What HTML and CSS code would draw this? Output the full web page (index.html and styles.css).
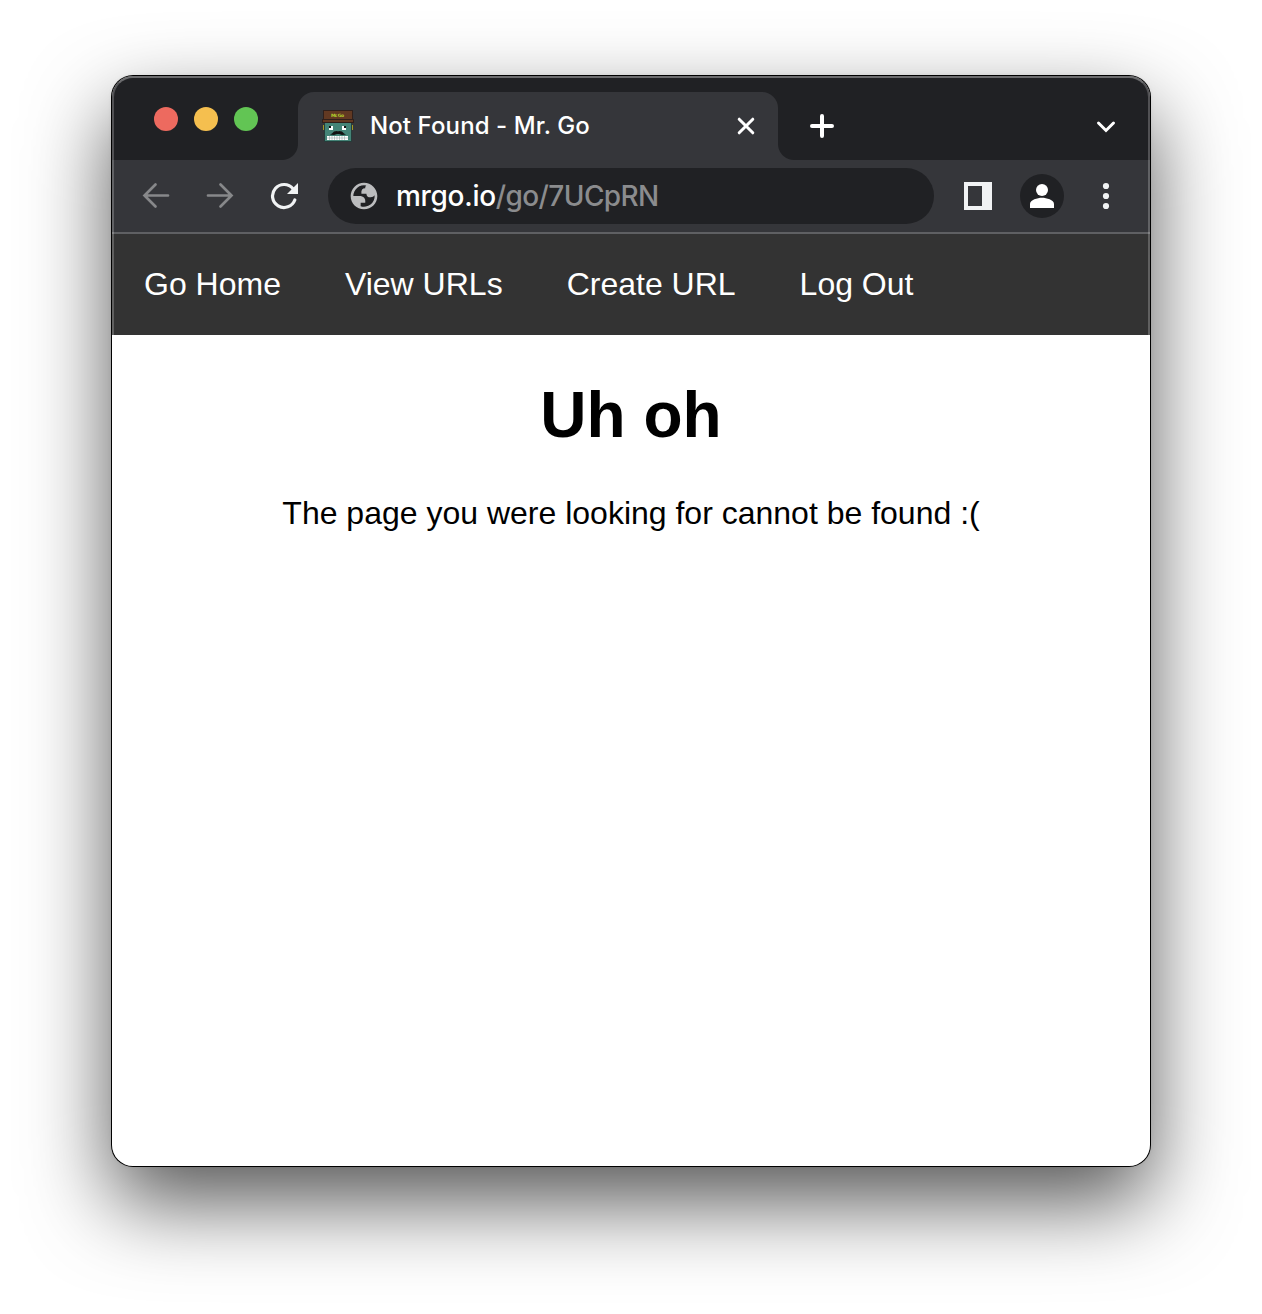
FILE: index.html
```html
<!DOCTYPE html>
<html lang="en">
<head>
<meta charset="utf-8">
<title>Not Found - Mr. Go</title>
<link rel="stylesheet" href="styles.css">
</head>
<body>
<div class="window">
  <div class="tabstrip">
    <div class="lights"><span class="light red"></span><span class="light yellow"></span><span class="light green"></span></div>
    <div class="tab">
      <svg class="favicon" width="32" height="32" viewBox="0 0 32 32">
        <path fill="#a29824" d="M1 15h2v5H1zM29 15h2v5h-2z"/>
        <path fill="#263c3a" d="M2 12h28v20H2z"/>
        <path fill="#448477" d="M3 13h26v18H3z"/>
        <path fill="#30201b" d="M1 0h30v9h1v4H0V9h1z"/>
        <path fill="#623922" d="M2 1h28v8H2zM1 10h30v2H1z"/>
        <path fill="#fff" d="M7 16h4v4H7zM20 16h4v4h-4zM5 26h21v4H5z"/>
        <path fill="#111" d="M7 16h2v2H7zM22 16h2v2h-2zM8 24.500l2-1 2-2 3-.5 1 .5 1-.5 3 .5 2 2 2 1-4 .5-3-1h-2l-3 1z"/>
        <path stroke="#849a98" stroke-width=".5" d="M5 28h21M7.500 26v4M10 26v4M12.500 26v4M15 26v4M17.500 26v4M20 26v4M22.500 26v4"/>
        <text x="9" y="6.500" class="brand" textLength="13">Mr. Go</text>
      </svg>
      <span class="title">Not Found - Mr. Go</span>
      <svg class="close" width="20" height="20" viewBox="0 0 20 20"><path d="M3.200 3.200l13.600 13.600M16.800 3.200L3.200 16.800"/></svg>
    </div>
    <svg class="plus" width="24" height="24" viewBox="0 0 24 24"><path d="M12 2v20M2 12h20"/></svg>
    <svg class="chevron" width="20" height="14" viewBox="0 0 20 14"><path d="M2.500 3L10 10.500 17.500 3"/></svg>
  </div>
  <div class="toolbar">
    <svg class="arrow back" width="28" height="28" viewBox="0 0 28 28"><path d="M26 13.500H2.500M13.500 2.500L2.500 13.500l11 11"/></svg>
    <svg class="arrow forward" width="28" height="28" viewBox="0 0 28 28"><path d="M2 13.500h23.500M14.500 2.500l11 11-11 11"/></svg>
    <svg class="reload" width="28" height="28" viewBox="0 0 28 28"><path class="ring" d="M24.800 18A11.500 11.500 0 1 1 23 6.800"/><path class="tip" d="M28 .9V12H17z"/></svg>
    <div class="address">
      <svg class="globe" width="32" height="32" viewBox="0 0 24 24"><path fill-rule="evenodd" d="M12 2C6.480 2 2 6.480 2 12s4.480 10 10 10 10-4.480 10-10S17.520 2 12 2zM4 12h4.400c3.407.022 4.922 1.730 4.543 5.127H9.488v2.470a8.004 8.004 0 0 0 10.498-8.080C19.327 12.504 18.332 13 17 13c-2.137 0-3.206-.916-3.206-2.750h-3.748c-.274-2.728.683-4.092 2.870-4.092 0-.975.327-1.597.811-1.970A8.004 8.004 0 0 0 4 12z"/></svg>
      <span class="url"><span class="host">mrgo.io</span><span class="path">/go/7UCpRN</span></span>
    </div>
    <svg class="panel" width="28" height="28" viewBox="0 0 28 28"><path fill-rule="evenodd" d="M0 0h28v28H0zM4 4v20h14V4z"/></svg>
    <svg class="avatar" width="44" height="44" viewBox="0 0 44 44"><circle class="disc" cx="22" cy="22" r="22"/><circle cx="22" cy="16" r="6"/><path d="M10 34v-4c0-4 7.500-6.200 12-6.200S34 26 34 30v4z"/></svg>
    <svg class="menu" width="8" height="28" viewBox="0 0 8 28"><circle cx="4" cy="4" r="3.100"/><circle cx="4" cy="14" r="3.100"/><circle cx="4" cy="24" r="3.100"/></svg>
  </div>
  <nav class="nav"><a>Go Home</a><a>View URLs</a><a>Create URL</a><a>Log Out</a></nav>
  <main class="content">
    <h1>Uh oh</h1>
    <p>The page you were looking for cannot be found :(</p>
  </main>
</div>
</body>
</html>
```
FILE: styles.css
```css
* { box-sizing: border-box; }
body { margin: 0; background: #fff; height: 1314px; padding: 76px 112px 148px; overflow: hidden; }
svg { display: block; flex: none; }
.window {
  position: relative; height: 1090px; border-radius: 21px; background: #fff; overflow: hidden;
  box-shadow: 0 0 0 1px #000, 0 36px 84px rgba(0,0,0,.67), 0 0 4px rgba(0,0,0,.1);
}
.window::after {
  content: ""; position: absolute; inset: 0; border-radius: 21px; pointer-events: none;
  border: 2px solid rgba(255,255,255,.22); border-top-color: rgba(255,255,255,.34);
}
.tabstrip { height: 84px; background: #202124; display: flex; align-items: flex-start; }
.lights { display: flex; gap: 16px; margin: 31px 40px 0 42px; }
.light { width: 24px; height: 24px; border-radius: 50%; }
.red { background: #ed6a5f; }
.yellow { background: #f5bf4f; }
.green { background: #62c554; }
.tab {
  position: relative; width: 480px; height: 68px; margin-top: 16px; padding: 0 22px 0 24px;
  background: #35363a; border-radius: 16px 16px 0 0; display: flex; align-items: center;
}
.tab::before, .tab::after { content: ""; position: absolute; bottom: 0; width: 16px; height: 16px; }
.tab::before { right: 100%; background: radial-gradient(circle at 0 0, transparent 15.5px, #35363a 16.5px); }
.tab::after { left: 100%; background: radial-gradient(circle at 100% 0, transparent 15.5px, #35363a 16.5px); }
.brand { font: bold 4.5px "DejaVu Sans", sans-serif; fill: #b5cf2b; }
.title { font: 450 24px/32px Inter, sans-serif; letter-spacing: .1px; color: #fff; margin-left: 16px; white-space: nowrap; }
.close { margin-left: auto; }
.close path, .plus path, .chevron path { fill: none; stroke: #fff; stroke-width: 3; stroke-linecap: round; }
.plus { margin: 38px 0 0 32px; }
.plus path { stroke-width: 4; }
.chevron { margin: 44px 34px 0 auto; }
.toolbar { height: 74px; padding: 8px 40px 8px 30px; background: #35363a; border-bottom: 2px solid #5f6063; display: flex; align-items: center; }
.arrow path { fill: none; stroke: #87888a; stroke-width: 2.700; stroke-linecap: round; }
.forward { margin-left: 36px; }
.reload { margin-left: 36px; }
.ring { fill: none; stroke: #f1f3f4; stroke-width: 3.200; stroke-linecap: round; }
.tip { fill: #f1f3f4; }
.address { width: 606px; height: 56px; margin-left: 30px; padding-left: 20px; border-radius: 28px; background: #202124; display: flex; align-items: center; }
.globe { fill: #bcbdbf; }
.url { font: 450 28px/36px Inter, sans-serif; margin-left: 16px; white-space: nowrap; }
.host { color: #fff; letter-spacing: -.3px; }
.path { color: #8b8c8e; letter-spacing: -.6px; }
.panel { fill: #f1f3f4; margin-left: 30px; }
.avatar { fill: #fff; margin-left: 28px; }
.disc { fill: #202124; }
.menu { fill: #f1f3f4; margin-left: 38px; }
.nav { height: 101px; padding: 0 32px; background: #333; display: flex; align-items: center; gap: 64px; font: 32px/37px "Liberation Sans", Arial, sans-serif; color: #fff; }
.content { text-align: center; color: #000; font: 32px/37px "Liberation Sans", Arial, sans-serif; }
h1 { font-size: 64px; line-height: 74px; margin: 43px 0; }
p { margin: 0; }
```
